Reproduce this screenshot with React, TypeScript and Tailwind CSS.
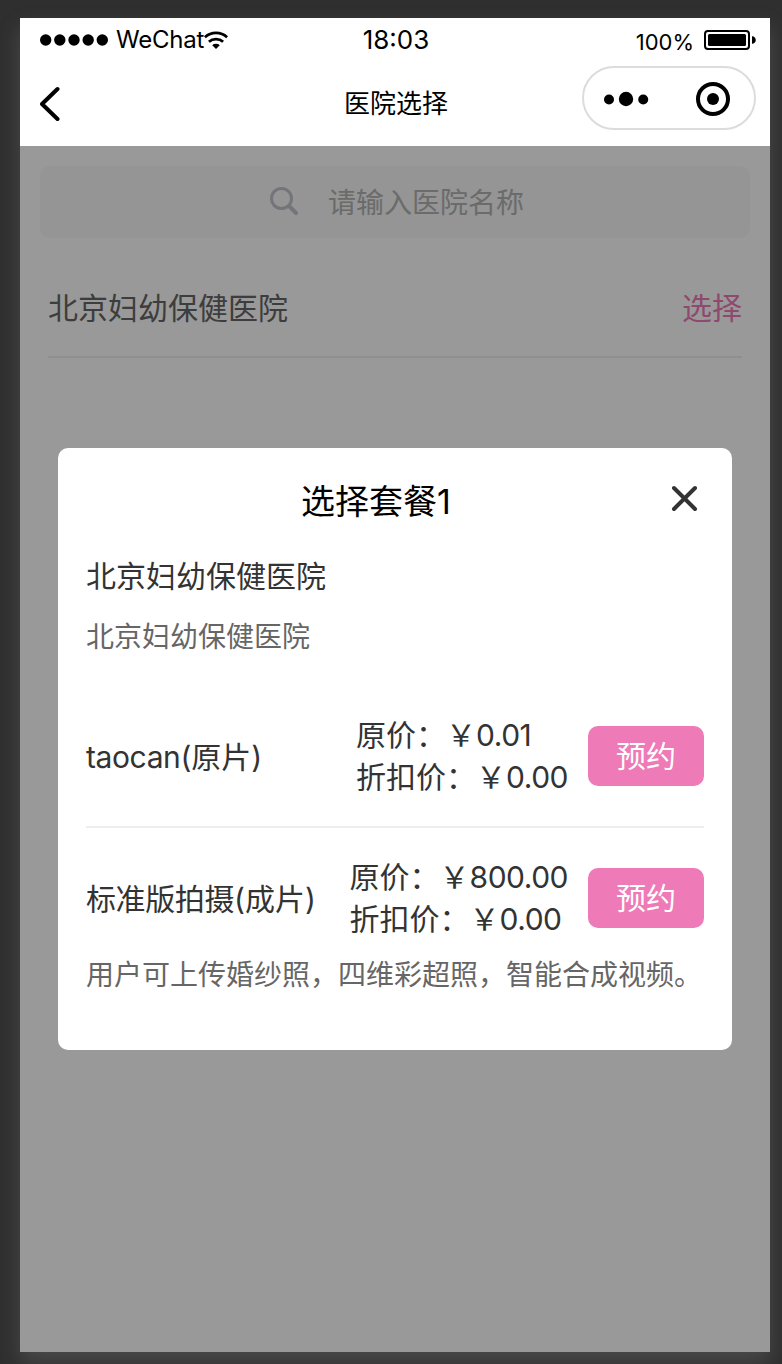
import type { ReactNode } from "react"

const packages = [
  { name: "taocan", kind: "(原片)", price: "0.01", discount: "0.00", desc: "" },
  {
    name: "标准版拍摄",
    kind: "(成片)",
    price: "800.00",
    discount: "0.00",
    desc: "用户可上传婚纱照，四维彩超照，智能合成视频。",
  },
]

function StatusBar() {
  return (
    <div className="flex h-11 items-center justify-between pl-5 pr-[14px]">
      <div className="flex w-[240px] items-center">
        <svg width="68" height="12" viewBox="0 0 68 12">
          <circle cx="5.7" cy="6" r="5.7" />
          <circle cx="19.8" cy="6" r="5.7" />
          <circle cx="34" cy="6" r="5.7" />
          <circle cx="48.2" cy="6" r="5.7" />
          <circle cx="62.3" cy="6" r="5.7" />
        </svg>
        <span className="ml-2 w-[88px] whitespace-nowrap text-[24px] leading-8 tracking-[-0.2px]">WeChat</span>
        <svg width="24" height="18" viewBox="0 0 24 18" fill="none" stroke="#000" strokeWidth="2.8">
          <path d="M0.9 6.2a16.5 16.5 0 0 1 22.2 0" />
          <path d="M4.9 10.8a10.8 10.8 0 0 1 14.2 0" />
          <path d="M8.2 14.2a5.6 5.6 0 0 1 7.6 0L12 18z" fill="#000" stroke="none" />
        </svg>
      </div>
      <span className="mb-px mr-1 text-[26px] leading-8">18:03</span>
      <div className="flex w-[240px] items-center justify-end">
        <span className="mr-[10px] pt-1 text-[22px] leading-8">100%</span>
        <svg width="52" height="20" viewBox="0 0 52 20">
          <rect x="1" y="1" width="44" height="18" rx="3" fill="none" stroke="#000" strokeWidth="2" />
          <rect x="4" y="4" width="38" height="12" rx="1.5" />
          <path d="M48 6.2c5 0 5 7.6 0 7.6z" />
        </svg>
      </div>
    </div>
  )
}

function NavBar() {
  return (
    <div className="flex h-[84px] items-start justify-between pl-5 pr-[14px]">
      <svg className="mt-6" width="173" height="36" viewBox="0 0 173 36" fill="none" stroke="#000" strokeWidth="4" strokeLinecap="round" strokeLinejoin="round">
        <path d="M17.5 3L2 18L17.5 33" />
      </svg>
      <h1 className="mr-[3px] mt-6 text-[26px] leading-9">医院选择</h1>
      <div className="mt-1 flex h-16 w-[174px] items-center justify-between rounded-full border-2 border-[#dcdcdc] pl-5 pr-6 pt-0.5">
        <svg width="46" height="16" viewBox="0 0 46 16">
          <circle cx="5" cy="8.5" r="5" />
          <circle cx="22" cy="8" r="7.2" />
          <circle cx="39.2" cy="8.5" r="5" />
        </svg>
        <svg width="34" height="34" viewBox="0 0 34 34">
          <circle cx="17" cy="17" r="15" fill="none" stroke="#000" strokeWidth="4" />
          <circle cx="17" cy="17" r="6" />
        </svg>
      </div>
    </div>
  )
}

function PriceLine({ label, value }: { label: string; value: string }) {
  return (
    <div className="whitespace-nowrap">
      {label}：￥<span className="tracking-[-0.5px]">{value}</span>
    </div>
  )
}

function Modal({ children }: { children: ReactNode }) {
  return (
    <div className="absolute inset-0 bg-black/40">
      <div className="mx-[38px] mt-[302px] h-[602px] rounded-[10px] bg-white px-7">{children}</div>
    </div>
  )
}

export default function App() {
  return (
    <div className="h-[1364px] overflow-hidden bg-[#2f2f2f] pl-5 pt-[18px] font-['Inter','Noto_Sans_CJK_SC',sans-serif] text-black">
      <div className="flex h-[1334px] w-[750px] flex-col bg-white shadow-[0_10px_20px_rgba(140,140,140,0.3)]">
        <StatusBar />
        <NavBar />

        <div className="relative flex-1">
          {/* search */}
          <div className="px-5 pt-5">
            <div className="flex h-[72px] items-center rounded-[10px] bg-[#f8f8f8] pl-[230px]">
              <svg className="mb-0.5" width="28" height="28" viewBox="0 0 28 28" fill="none" stroke="#c0c4cc" strokeWidth="3" strokeLinecap="round">
                <circle cx="11.5" cy="11.5" r="10" />
                <path d="M19.5 19.5L26 26" strokeWidth="4" />
              </svg>
              <span className="ml-[30px] mt-0.5 text-[28px] leading-10 text-[#b2b2b2]">请输入医院名称</span>
            </div>
          </div>

          {/* hospital list */}
          <div className="mx-7 mt-5 flex h-[100px] items-center justify-between border-b-2 border-[#eee] pt-0.5 text-[30px] leading-[42px]">
            <span className="text-[#666]">北京妇幼保健医院</span>
            <span className="text-[#ee7ab7]">选择</span>
          </div>

          <Modal>
            <div className="flex items-start pt-[30px]">
              <h2 className="flex-1 text-center text-[34px] leading-[48px]">选择套餐1</h2>
              <svg className="ml-[5px] mr-[5px] mt-[7px]" width="28" height="28" viewBox="0 0 28 28" fill="none" stroke="#333" strokeWidth="4" strokeLinecap="round">
                <path d="M3 3L24 24M24 3L3 24" />
              </svg>
            </div>
            <p className="mt-[29px] text-[30px] leading-[42px] text-[#333]">北京妇幼保健医院</p>
            <p className="mt-5 text-[28px] leading-10 text-[#666]">北京妇幼保健医院</p>

            <div className="mt-[27px]">
              {packages.map((item, i) => (
                <div key={item.name} className={i === 0 ? "border-b-2 border-[#eee] pb-7 pt-[30px]" : "pt-7"}>
                  <div className="flex h-[84px] items-center text-[30px] leading-[42px] text-[#333]">
                    <span className="flex-1 whitespace-nowrap pt-0.5">
                      <span className="tracking-[-0.4px]">{item.name}</span>
                      {item.kind}
                    </span>
                    <div>
                      <PriceLine label="原价" value={item.price} />
                      <PriceLine label="折扣价" value={item.discount} />
                    </div>
                    <button className="ml-5 h-[60px] w-[116px] rounded-[10px] bg-[#ee7ab7] text-white">预约</button>
                  </div>
                  {item.desc && <p className="mt-[15px] whitespace-nowrap text-[28px] leading-10 text-[#666]">{item.desc}</p>}
                </div>
              ))}
            </div>
          </Modal>
        </div>
      </div>
    </div>
  )
}
